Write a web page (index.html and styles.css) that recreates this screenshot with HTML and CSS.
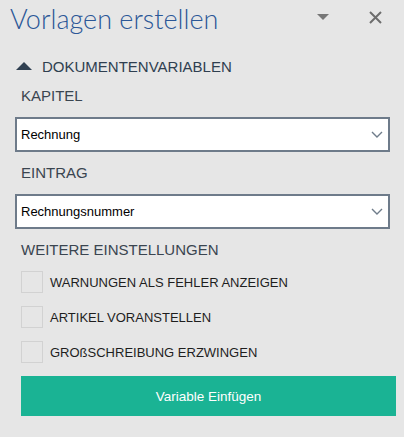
FILE: index.html
```html
<!DOCTYPE html>
<html lang="de">
<head>
<meta charset="utf-8">
<link rel="stylesheet" href="styles.css">
</head>
<body>
<div class="pane">
  <header class="header">
    <h1 class="title">Vorlagen erstellen</h1>
    <div class="header-actions">
      <svg class="icon-menu" width="12" height="6" viewBox="0 0 12 6"><path d="M0 0H12L6 6Z" fill="#777"/></svg>
      <svg class="icon-close" width="13" height="13" viewBox="0 0 13 13"><path d="M1 1L12 12M12 1L1 12" stroke="#6d6d6d" stroke-width="2"/></svg>
    </div>
  </header>
  <div class="section-head">
    <svg class="caret" width="16" height="8" viewBox="0 0 16 8"><path d="M0 8H16L8 0Z" fill="#2f3f50"/></svg>
    <span>DOKUMENTENVARIABLEN</span>
  </div>
  <div class="content">
    <div class="label">KAPITEL</div>
    <div class="select">
      <span>Rechnung</span>
      <svg class="chev" width="12" height="7" viewBox="0 0 12 7"><path d="M1 1L6 6L11 1" stroke="#6f7c8a" stroke-width="1.4" fill="none"/></svg>
    </div>
    <div class="label">EINTRAG</div>
    <div class="select">
      <span>Rechnungsnummer</span>
      <svg class="chev" width="12" height="7" viewBox="0 0 12 7"><path d="M1 1L6 6L11 1" stroke="#6f7c8a" stroke-width="1.4" fill="none"/></svg>
    </div>
    <div class="label">WEITERE EINSTELLUNGEN</div>
    <div class="checks">
      <div class="check"><span class="box"></span><span>WARNUNGEN ALS FEHLER ANZEIGEN</span></div>
      <div class="check"><span class="box"></span><span>ARTIKEL VORANSTELLEN</span></div>
      <div class="check"><span class="box"></span><span>GROßSCHREIBUNG ERZWINGEN</span></div>
    </div>
    <button class="btn">Variable Einfügen</button>
  </div>
</div>
</body>
</html>
```
FILE: styles.css
```css
html, body {
  margin: 0;
  padding: 0;
  background: #e6e6e6;
}
body {
  width: 404px;
  height: 437px;
  overflow: hidden;
  font-family: "Liberation Sans", Arial, sans-serif;
}
.pane {
  display: flex;
  flex-direction: column;
}
.header {
  display: flex;
  align-items: flex-start;
  justify-content: space-between;
  height: 50px;
}
.title {
  margin: 0;
  padding: 3px 0 0 10px;
  font-family: Lato, "Open Sans", sans-serif;
  font-weight: 300;
  font-size: 27px;
  line-height: 32px;
  color: #2b5797;
}
.header-actions {
  display: flex;
  align-items: flex-start;
  padding-top: 11px;
}
.icon-menu {
  margin-top: 3px;
  margin-right: 40px;
}
.icon-close {
  margin-right: 22px;
}
.section-head {
  display: flex;
  align-items: center;
  height: 20px;
  margin-top: 6px;
  padding-left: 16px;
  font-size: 15px;
  color: #2f3f50;
}
.caret {
  margin-right: 10px;
  margin-top: -1px;
}
.content {
  display: flex;
  flex-direction: column;
  padding-left: 15px;
}
.label {
  height: 20px;
  line-height: 20px;
  margin-top: 11px;
  padding-left: 6px;
  font-size: 15px;
  color: #3a4550;
}
.section-head + .content > .label:first-child {
  margin-top: 10px;
}
.select {
  box-sizing: border-box;
  width: 375px;
  height: 35px;
  margin-top: 11px;
  border: 2px solid #6e7b8a;
  background: #fff;
  display: flex;
  align-items: center;
  justify-content: space-between;
  padding: 0 5px 0 4px;
  font-size: 13px;
  color: #000;
}
.checks {
  display: flex;
  flex-direction: column;
  gap: 13px;
  margin-top: 11px;
  padding-left: 6px;
}
.check {
  display: flex;
  align-items: center;
  gap: 7px;
  font-size: 13px;
  color: #1e1e1e;
}
.box {
  box-sizing: border-box;
  width: 22px;
  height: 22px;
  border: 1px solid #d2d2d2;
  background: #e6e6e6;
}
.btn {
  width: 375px;
  height: 40px;
  margin: 13px 0 0 6px;
  border: none;
  background: #1ab394;
  color: #fff;
  font-family: "Liberation Sans", Arial, sans-serif;
  font-size: 13.5px;
  padding: 0;
}
```
